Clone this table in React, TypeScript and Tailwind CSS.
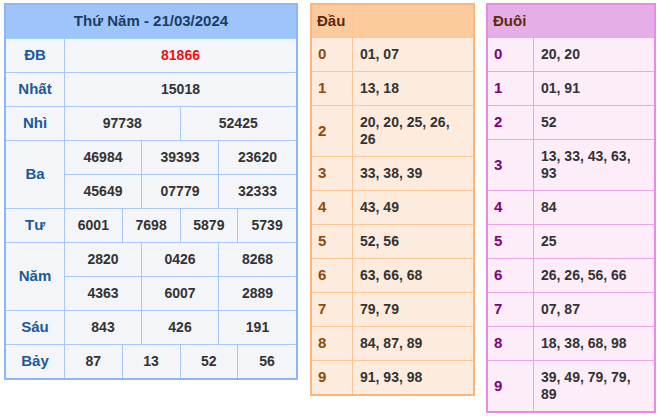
import React from "react"

const font = { fontFamily: '"Liberation Sans", Arial, sans-serif' }

type PrizeRow = { label: string; rows: string[][]; red?: boolean }

const PRIZES: PrizeRow[] = [
  { label: "ĐB", rows: [["81866"]], red: true },
  { label: "Nhất", rows: [["15018"]] },
  { label: "Nhì", rows: [["97738", "52425"]] },
  { label: "Ba", rows: [["46984", "39393", "23620"], ["45649", "07779", "32333"]] },
  { label: "Tư", rows: [["6001", "7698", "5879", "5739"]] },
  { label: "Năm", rows: [["2820", "0426", "8268"], ["4363", "6007", "2889"]] },
  { label: "Sáu", rows: [["843", "426", "191"]] },
  { label: "Bảy", rows: [["87", "13", "52", "56"]] },
]

const DAU = [
  "01, 07",
  "13, 18",
  "20, 20, 25, 26, 26",
  "33, 38, 39",
  "43, 49",
  "52, 56",
  "63, 66, 68",
  "79, 79",
  "84, 87, 89",
  "91, 93, 98",
]

const DUOI = [
  "20, 20",
  "01, 91",
  "52",
  "13, 33, 43, 63, 93",
  "84",
  "25",
  "26, 26, 56, 66",
  "07, 87",
  "18, 38, 68, 98",
  "39, 49, 79, 79, 89",
]

const gridCols: Record<number, string> = {
  1: "grid-cols-1",
  2: "grid-cols-2",
  3: "grid-cols-3",
  4: "grid-cols-4",
}

function ResultTable() {
  return (
    <div className="w-[294px] shrink-0 border-2 border-[#8cb6f6] bg-[#f4f5f9]">
      <div className="h-[33px] bg-[#9ec5fb] flex items-center justify-center text-[15px] font-bold text-[#1d3c5e]">
        Thứ Năm - 21/03/2024
      </div>
      {PRIZES.map((p) => (
        <div key={p.label} className="flex border-t border-[#a8c8f5]">
          <div className="w-[59px] shrink-0 border-r border-[#a8c8f5] flex items-center justify-center text-[15px] font-bold text-[#1b5a98]">
            {p.label}
          </div>
          <div className="flex-1 flex flex-col">
            {p.rows.map((r, i) => (
              <div
                key={i}
                className={`grid ${gridCols[r.length]} divide-x divide-[#a8c8f5] ${
                  i > 0 ? "h-[34px] border-t border-[#a8c8f5]" : "h-[33px]"
                }`}
              >
                {r.map((n, j) => (
                  <div
                    key={j}
                    className={`flex items-center justify-center text-[14px] font-bold ${
                      p.red ? "text-[#ee1111]" : "text-[#333333]"
                    }`}
                  >
                    {n}
                  </div>
                ))}
              </div>
            ))}
          </div>
        </div>
      ))}
    </div>
  )
}

interface LotoTableProps {
  title: string
  items: string[]
  width: string
  labelW: string
  outer: string
  inner: string
  head: string
  body: string
  titleColor: string
  labelColor: string
}

function LotoTable({ title, items, width, labelW, outer, inner, head, body, titleColor, labelColor }: LotoTableProps) {
  return (
    <div className={`${width} shrink-0 border-2 ${outer} ${body}`}>
      <div className={`flex h-[32px] ${head}`}>
        <div className={`${labelW} shrink-0 border-r ${inner} flex items-center pl-[5px] text-[15px] font-bold ${titleColor}`}>
          {title}
        </div>
        <div className="flex-1" />
      </div>
      {items.map((v, i) => (
        <div key={i} className={`flex border-t ${inner}`}>
          <div className={`${labelW} shrink-0 border-r ${inner} flex items-center pl-[6px] text-[15px] font-bold ${labelColor}`}>
            {i}
          </div>
          <div className="flex-1 py-2 pl-[7px] pr-[8px] text-[14px] leading-[17px] font-bold text-[#333333]">{v}</div>
        </div>
      ))}
    </div>
  )
}

export default function App() {
  return (
    <div className="w-[660px] h-[416px] bg-white pt-[3px] pl-[4px] flex items-start" style={font}>
      <ResultTable />
      <div className="ml-[12px]">
        <LotoTable
          title="Đầu"
          items={DAU}
          width="w-[165px]"
          labelW="w-[41px]"
          outer="border-[#fdb57a]"
          inner="border-[#fcc795]"
          head="bg-[#fbcb9d]"
          body="bg-[#fdebde]"
          titleColor="text-[#5a2c0c]"
          labelColor="text-[#8f4a0e]"
        />
      </div>
      <div className="ml-[11px]">
        <LotoTable
          title="Đuôi"
          items={DUOI}
          width="w-[170px]"
          labelW="w-[46px]"
          outer="border-[#e88be3]"
          inner="border-[#eaa6e6]"
          head="bg-[#e6aee6]"
          body="bg-[#fcedf9]"
          titleColor="text-[#5a2c0c]"
          labelColor="text-[#800080]"
        />
      </div>
    </div>
  )
}
